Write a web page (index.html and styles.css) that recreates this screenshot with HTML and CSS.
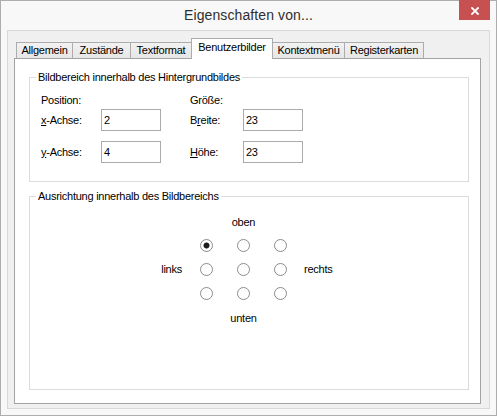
FILE: index.html
```html
<!DOCTYPE html>
<html lang="de">
<head>
<meta charset="utf-8">
<title>Eigenschaften von...</title>
<link rel="stylesheet" href="styles.css">
</head>
<body>
<div class="window">
  <div class="titlebar">
    <span class="title">Eigenschaften von...</span>
    <span class="close" aria-label="Schließen">
      <svg width="8" height="8" viewBox="0 0 8 8"><path d="M1 1L7 7M7 1L1 7" stroke="#fff" stroke-width="1.8" stroke-linecap="square"/></svg>
    </span>
  </div>
  <div class="client">
    <div class="tabstrip">
      <div class="tab w-allg">Allgemein</div>
      <div class="tab w-zust">Zustände</div>
      <div class="tab w-text">Textformat</div>
      <div class="tab tab-active w-benu">Benutzerbilder</div>
      <div class="tab w-kont">Kontextmenü</div>
      <div class="tab w-reg">Registerkarten</div>
    </div>
    <div class="page">
      <fieldset class="group group-area">
        <legend>Bildbereich innerhalb des Hintergrundbildes</legend>
        <div class="formgrid">
          <div class="lbl head">Position:</div>
          <div></div>
          <div></div>
          <div class="lbl head">Größe:</div>
          <div></div>

          <div class="lbl"><u>x</u>-Achse:</div>
          <div class="textbox">2</div>
          <div></div>
          <div class="lbl">B<u>r</u>eite:</div>
          <div class="textbox">23</div>

          <div class="lbl"><u>y</u>-Achse:</div>
          <div class="textbox">4</div>
          <div></div>
          <div class="lbl"><u>H</u>öhe:</div>
          <div class="textbox">23</div>
        </div>
      </fieldset>
      <fieldset class="group group-align">
        <legend>Ausrichtung innerhalb des Bildbereichs</legend>
        <div class="aligngrid">
          <div></div><div></div><div class="cap">oben</div><div></div><div></div>

          <div></div>
          <div class="cell"><span class="radio checked"></span></div>
          <div class="cell"><span class="radio"></span></div>
          <div class="cell"><span class="radio"></span></div>
          <div></div>

          <div class="side left">links</div>
          <div class="cell"><span class="radio"></span></div>
          <div class="cell"><span class="radio"></span></div>
          <div class="cell"><span class="radio"></span></div>
          <div class="side right">rechts</div>

          <div></div>
          <div class="cell"><span class="radio"></span></div>
          <div class="cell"><span class="radio"></span></div>
          <div class="cell"><span class="radio"></span></div>
          <div></div>

          <div></div><div></div><div class="cap cap-bottom">unten</div><div></div><div></div>
        </div>
      </fieldset>
    </div>
  </div>
</div>
</body>
</html>
```

FILE: styles.css
```css
* { box-sizing: border-box; }

html, body {
  margin: 0;
  padding: 0;
  background: #f8f8f8;
}

body {
  font-family: "Liberation Sans", Arial, sans-serif;
  font-size: 11px;
  letter-spacing: -0.25px;
  color: #000;
}

.window {
  position: relative;
  width: 497px;
  height: 416px;
  border: 1px solid #adadad;
  background: #f8f8f8;
  display: flex;
  flex-direction: column;
}

.titlebar {
  height: 29px;
  flex: none;
  text-align: center;
}

.title {
  font-size: 14px;
  line-height: 29px;
  letter-spacing: 0.1px;
  color: #2e2e2e;
}

.close {
  position: absolute;
  top: -1px;
  right: 6px;
  width: 31px;
  height: 20px;
  background: #c75050;
  display: flex;
  align-items: center;
  justify-content: center;
}

.close svg { display: block; margin-top: 2px; }

.client {
  flex: 1;
  margin: 0 6px 6px 6px;
  border: 1px solid #d9d9d9;
  background: #f0f0f0;
  padding: 7px 8px 4px 6px;
  display: flex;
  flex-direction: column;
}

.tabstrip {
  height: 20px;
  flex: none;
  display: flex;
  align-items: flex-end;
  padding-left: 2px;
}

.tab {
  height: 16px;
  margin-right: -1px;
  border: 1px solid #acacac;
  border-bottom: none;
  background: linear-gradient(#f2f2f2, #e6e6e6);
  text-align: center;
  line-height: 15px;
  white-space: nowrap;
}

.tab-active {
  position: relative;
  z-index: 1;
  height: 21px;
  margin-bottom: -1px;
  background: #fff;
  line-height: 17px;
}

.w-allg { width: 57px; }
.w-zust { width: 59px; }
.w-text { width: 62px; }
.w-benu { width: 82px; }
.w-kont { width: 73px; }
.w-reg  { width: 80px; }

.page {
  flex: 1;
  width: 467px;
  border: 1px solid #a3a3a3;
  background: #fff;
  display: flex;
  flex-direction: column;
}

.group {
  margin: 0 11px 0 14px;
  padding: 0;
  border: 1px solid #dcdcdc;
  min-width: 0;
}

.group legend {
  margin-left: 6px;
  padding: 0 2px;
  line-height: 15px;
}

.group-area {
  margin-top: 11px;
  padding: 7px 0 18px 0;
}

.group-align {
  margin-top: 7px;
  margin-bottom: 13px;
  flex: 1;
  padding: 7px 0 0 0;
}

.formgrid {
  margin-left: 11px;
  display: grid;
  grid-template-columns: 60px 60px 29px 53px 60px;
  grid-template-rows: 17px 32px 22px;
}

.lbl {
  line-height: 22px;
  height: 22px;
}

.lbl.head {
  line-height: 16px;
  height: 16px;
}

.textbox {
  height: 22px;
  border: 1px solid #ababab;
  background: #fff;
  padding: 0 2px;
  line-height: 20px;
}

.aligngrid {
  margin-left: 112px;
  display: grid;
  grid-template-columns: 46px 37px 37px 37px auto;
  grid-template-rows: 22px 24px 24px 24px 26px;
}

.cap {
  text-align: center;
  line-height: 22px;
}

.cap.cap-bottom { line-height: 26px; }

.cell {
  display: flex;
  align-items: center;
  justify-content: center;
}

.side { line-height: 24px; }
.side.left { text-align: right; padding-right: 6px; }
.side.right { padding-left: 5px; }

.radio {
  display: block;
  width: 13px;
  height: 13px;
  border-radius: 50%;
  border: 1px solid #8c8c8c;
  background: #fff;
}

.radio.checked {
  background: radial-gradient(circle, #1c1c1c 0, #1c1c1c 2.6px, #fff 3.4px);
}
```
